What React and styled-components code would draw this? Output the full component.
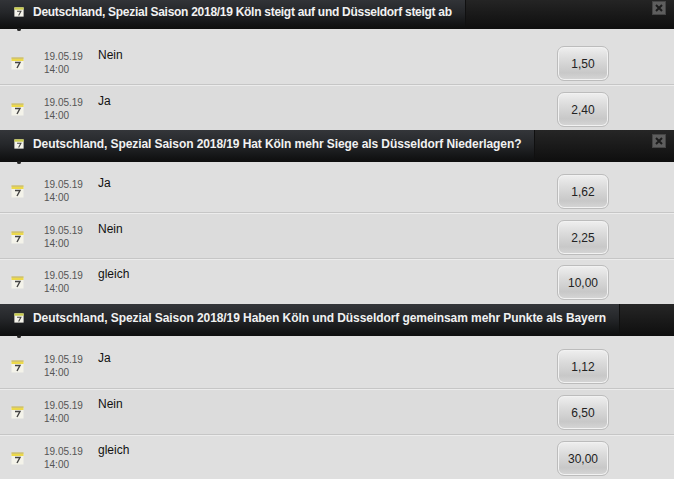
import React from "react";
import styled, { createGlobalStyle } from "styled-components";

const Global = createGlobalStyle`
  html, body { margin: 0; padding: 0; background: #dedede; overflow: hidden; }
  body { font-family: "Liberation Sans", Arial, sans-serif; }
`;

const Page = styled.div`
  width: 674px;
  height: 479px;
  overflow: hidden;
  display: flex;
  flex-direction: column;
`;

const Group = styled.section`
  display: flex;
  flex-direction: column;
  flex: none;
  margin-top: ${(p) => p.$offset || 0}px;
`;

const Header = styled.header`
  position: relative;
  height: ${(p) => p.$height}px;
  flex: none;
  display: flex;
  align-items: stretch;
  justify-content: space-between;
  background: linear-gradient(#262626 0%, #1b1b1b 45%, #131313 80%, #0e0e0e 100%);
  &::after {
    content: "";
    position: absolute;
    left: 17px;
    bottom: -2px;
    width: 4px;
    height: 3px;
    border-radius: 50%;
    background: #222;
  }
`;

const Tab = styled.div`
  display: flex;
  align-items: center;
  gap: 9px;
  padding: 0 13px 4px 14px;
  background: linear-gradient(#34363a 0%, #25272a 45%, #131415 85%, #0e0e0e 100%);
  box-shadow: 1px 0 0 #101010;
`;

const Title = styled.h2`
  margin: 0;
  font-size: 12px;
  line-height: 14px;
  font-weight: 700;
  color: #f1f1f1;
  white-space: nowrap;
  letter-spacing: ${(p) => p.$spacing}px;
`;

const Close = styled.div`
  align-self: flex-start;
  margin: ${(p) => p.$top}px 9px 0 0;
  width: 12px;
  height: 12px;
  display: flex;
  background: #5e5e5e;
  box-shadow: 0 0 0 1px #454545;
`;

const Row = styled.div`
  height: ${(p) => p.$height}px;
  box-sizing: border-box;
  padding-top: ${(p) => p.$top}px;
  display: flex;
  align-items: flex-start;
  background: ${(p) => (p.$alt ? "#dcdcdc" : "#dfdfdf")};
  border-bottom: ${(p) => (p.$last ? "0" : "1px solid #c6c6c6")};
  box-shadow: ${(p) => (p.$first ? "none" : "inset 0 1px 0 #ececec")};
`;

const RowIcon = styled.div`
  flex: none;
  width: 44px;
  padding: 11px 0 0 11px;
  box-sizing: border-box;
  display: flex;
`;

const When = styled.div`
  flex: none;
  width: 54px;
  padding-top: 4px;
  font-size: 10px;
  line-height: 13px;
  color: #555;
`;

const Label = styled.div`
  flex: 1;
  padding-top: 2px;
  font-size: 12px;
  line-height: 14px;
  color: #111;
`;

const Odd = styled.button`
  flex: none;
  width: 52px;
  height: 35px;
  margin: 0 65px 0 0;
  padding: 0;
  box-sizing: border-box;
  font: 12px "Liberation Sans", Arial, sans-serif;
  color: #222;
  border: 1px solid #bcbcbc;
  border-radius: 7px;
  background: linear-gradient(#efefef 0%, #dcdcdc 35%, #c8c8c8 78%, #d6d6d6 100%);
  box-shadow: inset 0 0 0 1px #f2f2f2;
`;

const Calendar = ({ size = 13, header }) => (
  <svg width={size} height={size} viewBox="0 0 13 13" style={{ flex: "none", display: "block" }}>
    <rect x="0.5" y="0.5" width="12" height="12" fill="#f4f3ea" />
    <rect x="0.5" y="0.5" width="12" height={header ? 3 : 3.5} fill={header ? "#c8cc4a" : "#ecd94a"} />
    {!header && <rect x="0.5" y="0.5" width="12" height="1" fill="#b9b08a" />}
    <path d="M4 5.5h5L6 11" fill="none" stroke="#444" strokeWidth="1.4" />
  </svg>
);

const CloseX = () => (
  <svg width="12" height="12" viewBox="0 0 12 12">
    <path d="M3 3l6 6M9 3l-6 6" stroke="#1c1c1c" strokeWidth="2" />
  </svg>
);

const date = ["19.05.19", "14:00"];

const groups = [
  {
    offset: -2,
    headerHeight: 31,
    closeTop: 4,
    spacing: -0.28,
    title: "Deutschland, Spezial Saison 2018/19 Köln steigt auf und Düsseldorf steigt ab",
    close: true,
    rows: [
      { label: "Nein", odd: "1,50", top: 17, height: 56 },
      { label: "Ja", odd: "2,40", top: 7, height: 45 },
    ],
  },
  {
    headerHeight: 32,
    closeTop: 5,
    spacing: -0.085,
    title: "Deutschland, Spezial Saison 2018/19 Hat Köln mehr Siege als Düsseldorf Niederlagen?",
    close: true,
    rows: [
      { label: "Ja", odd: "1,62", top: 12, height: 51 },
      { label: "Nein", odd: "2,25", top: 7, height: 46 },
      { label: "gleich", odd: "10,00", top: 6, height: 45 },
    ],
  },
  {
    headerHeight: 32,
    spacing: -0.075,
    title: "Deutschland, Spezial Saison 2018/19 Haben Köln und Düsseldorf gemeinsam mehr Punkte als Bayern",
    rows: [
      { label: "Ja", odd: "1,12", top: 13, height: 53 },
      { label: "Nein", odd: "6,50", top: 6, height: 46 },
      { label: "gleich", odd: "30,00", top: 6, height: 46 },
    ],
  },
];

export default function App() {
  return (
    <Page>
      <Global />
      {groups.map((g) => (
        <Group key={g.title} $offset={g.offset}>
          <Header $height={g.headerHeight}>
            <Tab>
              <Calendar size={10} header />
              <Title $spacing={g.spacing}>{g.title}</Title>
            </Tab>
            {g.close && (
              <Close $top={g.closeTop}>
                <CloseX />
              </Close>
            )}
          </Header>
          {g.rows.map((r, i) => (
            <Row
              key={r.label}
              $top={r.top}
              $height={r.height}
              $alt={i % 2 === 1}
              $first={i === 0}
              $last={i === g.rows.length - 1}
            >
              <RowIcon>
                <Calendar />
              </RowIcon>
              <When>
                {date[0]}
                <br />
                {date[1]}
              </When>
              <Label>{r.label}</Label>
              <Odd>{r.odd}</Odd>
            </Row>
          ))}
        </Group>
      ))}
    </Page>
  );
}
